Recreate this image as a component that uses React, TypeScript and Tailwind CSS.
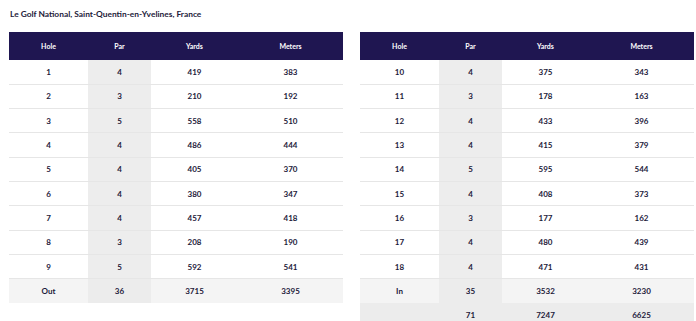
type Row = { hole: string; par: string; yards: string; meters: string };

const front: Row[] = [
  { hole: "1", par: "4", yards: "419", meters: "383" },
  { hole: "2", par: "3", yards: "210", meters: "192" },
  { hole: "3", par: "5", yards: "558", meters: "510" },
  { hole: "4", par: "4", yards: "486", meters: "444" },
  { hole: "5", par: "4", yards: "405", meters: "370" },
  { hole: "6", par: "4", yards: "380", meters: "347" },
  { hole: "7", par: "4", yards: "457", meters: "418" },
  { hole: "8", par: "3", yards: "208", meters: "190" },
  { hole: "9", par: "5", yards: "592", meters: "541" },
];

const back: Row[] = [
  { hole: "10", par: "4", yards: "375", meters: "343" },
  { hole: "11", par: "3", yards: "178", meters: "163" },
  { hole: "12", par: "4", yards: "433", meters: "396" },
  { hole: "13", par: "4", yards: "415", meters: "379" },
  { hole: "14", par: "5", yards: "595", meters: "544" },
  { hole: "15", par: "4", yards: "408", meters: "373" },
  { hole: "16", par: "3", yards: "177", meters: "162" },
  { hole: "17", par: "4", yards: "480", meters: "439" },
  { hole: "18", par: "4", yards: "471", meters: "431" },
];

const ScoreTable = ({ rows, total, grand }: { rows: Row[]; total: Row; grand?: Row }) => (
  <table className="w-[334px] table-fixed border-collapse text-center">
    <colgroup>
      <col className="w-[79px]" />
      <col className="w-[63px]" />
      <col className="w-[87px]" />
      <col />
    </colgroup>
    <thead>
      <tr className="h-[28px] bg-[#1f1651] text-white text-[7px] font-bold">
        <th>Hole</th>
        <th>Par</th>
        <th>Yards</th>
        <th>Meters</th>
      </tr>
    </thead>
    <tbody className="text-[8px] font-bold text-[#1d1a3a]">
      {rows.map((r) => (
        <tr key={r.hole} className="h-[24.3px] border-b border-[#e6e6e6] bg-white">
          <td>{r.hole}</td>
          <td className="bg-[#ededed]">{r.par}</td>
          <td>{r.yards}</td>
          <td>{r.meters}</td>
        </tr>
      ))}
      <tr className="h-[24.3px] bg-[#f4f4f4]">
        <td>{total.hole}</td>
        <td className="bg-[#ececec]">{total.par}</td>
        <td>{total.yards}</td>
        <td>{total.meters}</td>
      </tr>
      {grand && (
        <tr className="h-[24.3px] bg-[#ececec]">
          <td>{grand.hole}</td>
          <td>{grand.par}</td>
          <td>{grand.yards}</td>
          <td>{grand.meters}</td>
        </tr>
      )}
    </tbody>
  </table>
);

export default function App() {
  return (
    <div className="w-[696px] h-[321px] overflow-hidden bg-white pl-[9px] pt-[9px] font-['Lato','Noto_Sans',sans-serif]">
      <div className="pl-[1px] h-[10px] text-[8.4px] font-bold leading-[10px] text-[#1d1a3a]">
        Le Golf National, Saint-Quentin-en-Yvelines, France
      </div>
      <div className="mt-[13px] flex items-start gap-[17px]">
        <ScoreTable rows={front} total={{ hole: "Out", par: "36", yards: "3715", meters: "3395" }} />
        <ScoreTable
          rows={back}
          total={{ hole: "In", par: "35", yards: "3532", meters: "3230" }}
          grand={{ hole: "", par: "71", yards: "7247", meters: "6625" }}
        />
      </div>
    </div>
  );
}
